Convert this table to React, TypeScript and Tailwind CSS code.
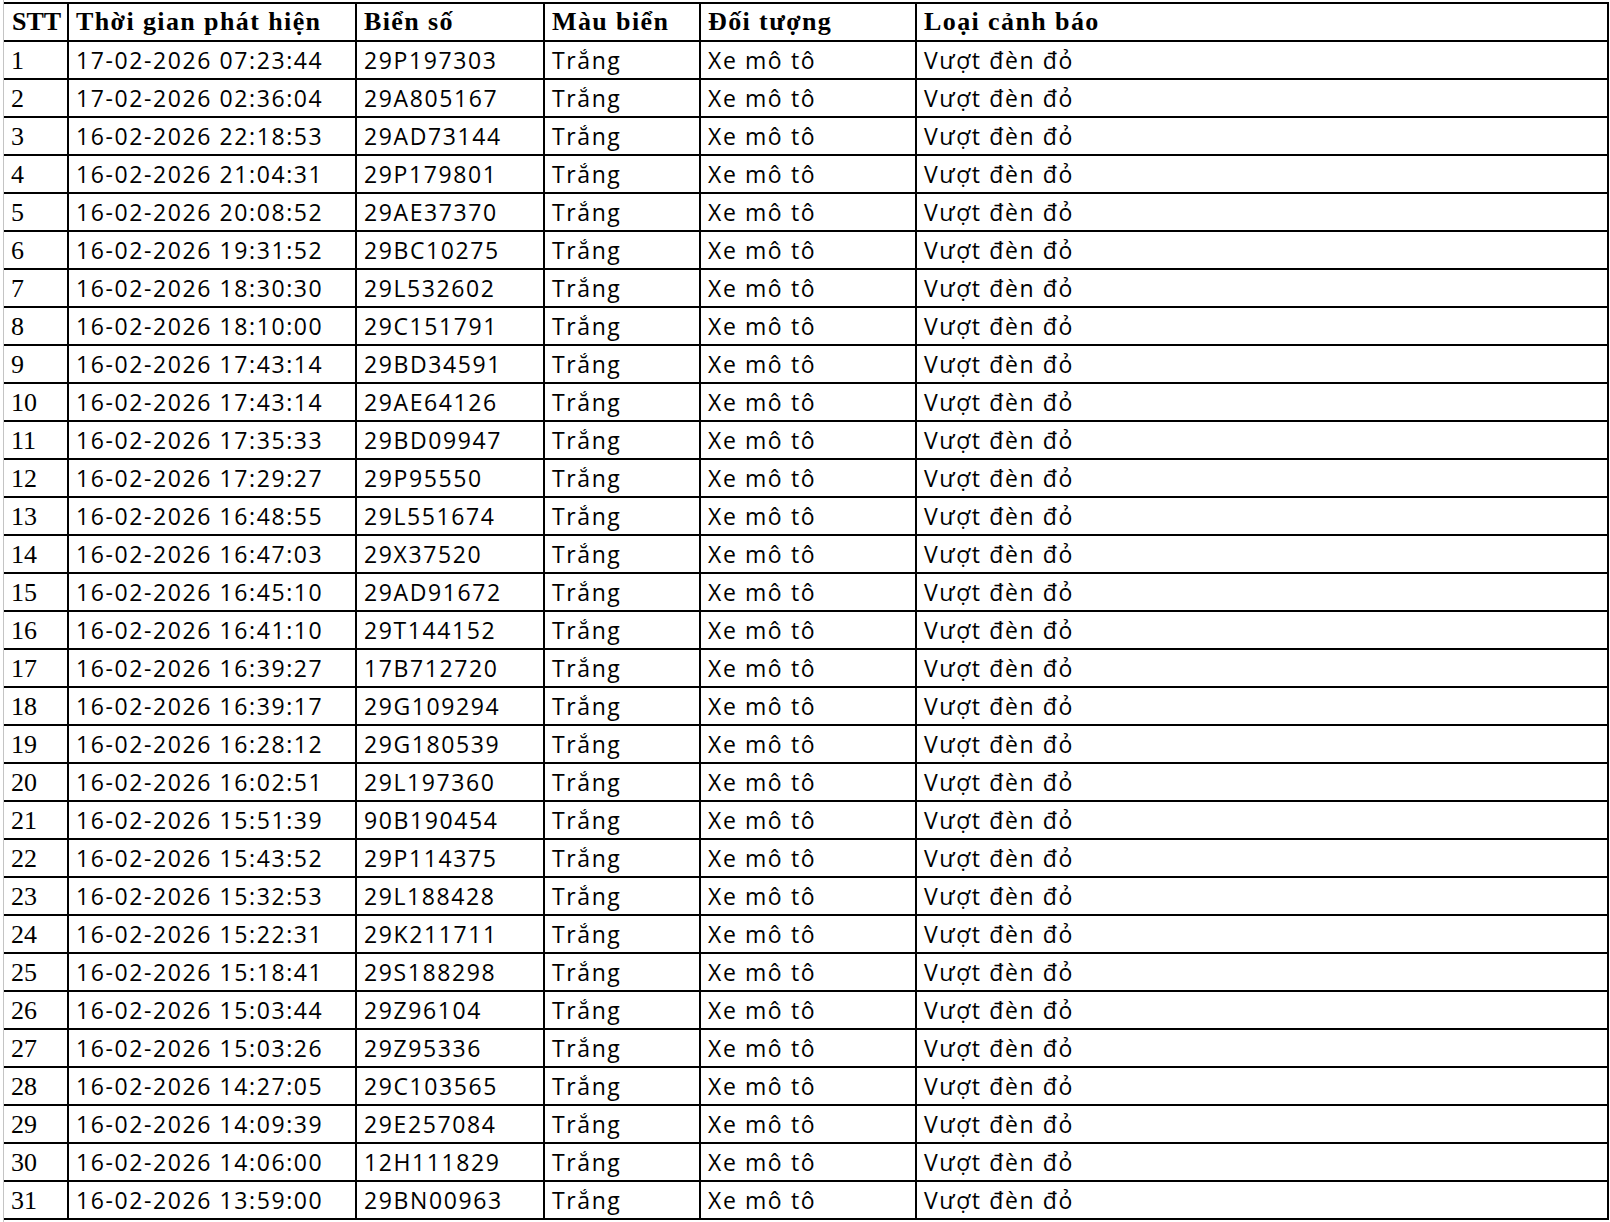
const rows: [string, string][] = [
  ['17-02-2026 07:23:44', '29P197303'],
  ['17-02-2026 02:36:04', '29A805167'],
  ['16-02-2026 22:18:53', '29AD73144'],
  ['16-02-2026 21:04:31', '29P179801'],
  ['16-02-2026 20:08:52', '29AE37370'],
  ['16-02-2026 19:31:52', '29BC10275'],
  ['16-02-2026 18:30:30', '29L532602'],
  ['16-02-2026 18:10:00', '29C151791'],
  ['16-02-2026 17:43:14', '29BD34591'],
  ['16-02-2026 17:43:14', '29AE64126'],
  ['16-02-2026 17:35:33', '29BD09947'],
  ['16-02-2026 17:29:27', '29P95550'],
  ['16-02-2026 16:48:55', '29L551674'],
  ['16-02-2026 16:47:03', '29X37520'],
  ['16-02-2026 16:45:10', '29AD91672'],
  ['16-02-2026 16:41:10', '29T144152'],
  ['16-02-2026 16:39:27', '17B712720'],
  ['16-02-2026 16:39:17', '29G109294'],
  ['16-02-2026 16:28:12', '29G180539'],
  ['16-02-2026 16:02:51', '29L197360'],
  ['16-02-2026 15:51:39', '90B190454'],
  ['16-02-2026 15:43:52', '29P114375'],
  ['16-02-2026 15:32:53', '29L188428'],
  ['16-02-2026 15:22:31', '29K211711'],
  ['16-02-2026 15:18:41', '29S188298'],
  ['16-02-2026 15:03:44', '29Z96104'],
  ['16-02-2026 15:03:26', '29Z95336'],
  ['16-02-2026 14:27:05', '29C103565'],
  ['16-02-2026 14:09:39', '29E257084'],
  ['16-02-2026 14:06:00', '12H111829'],
  ['16-02-2026 13:59:00', '29BN00963'],
]

// column widths include the 2px right border
const cols = ['w-[65px]', 'w-[288px]', 'w-[188px]', 'w-[156px]', 'w-[216px]', 'w-[692px]']
const headers = ['STT', 'Thời gian phát hiện', 'Biển số', 'Màu biển', 'Đối tượng', 'Loại cảnh báo']

const cell = 'flex items-end pl-[7px] border-r-2 border-black whitespace-nowrap overflow-hidden'
const sans = "font-['Open_Sans',sans-serif] tracking-[1.6px] pb-[6px]"

export default function App() {
  return (
    <div className="flex h-[1222px] w-[1610px] bg-white text-black">
      <div className="w-[3px]" />
      <div className="w-px bg-[#c4c4c4]" />
      <div className="pt-[2px]">
        <div className="w-[1605px] border-t-2 border-black">
          <div className="flex h-[38px] border-b-2 border-black font-['Liberation_Serif',serif] font-bold text-[26px] leading-none tracking-[1.4px]">
            {headers.map((h, i) => (
              <div key={h} className={`${cols[i]} ${cell} pb-[5px] ${i === 0 ? 'tracking-normal pl-[8px]' : ''}`}>
                {h}
              </div>
            ))}
          </div>
          {rows.map(([time, plate], i) => (
            <div key={i} className="flex h-[38px] border-b-2 border-black text-[23px] leading-none">
              <div className={`${cols[0]} ${cell} pb-[4px] font-['Liberation_Serif',serif] text-[26px]`}>{i + 1}</div>
              <div className={`${cols[1]} ${cell} ${sans}`}>{time}</div>
              <div className={`${cols[2]} ${cell} ${sans}`}>{plate}</div>
              <div className={`${cols[3]} ${cell} ${sans}`}>Trắng</div>
              <div className={`${cols[4]} ${cell} ${sans}`}>Xe mô tô</div>
              <div className={`${cols[5]} ${cell} ${sans}`}>Vượt đèn đỏ</div>
            </div>
          ))}
        </div>
      </div>
    </div>
  )
}
